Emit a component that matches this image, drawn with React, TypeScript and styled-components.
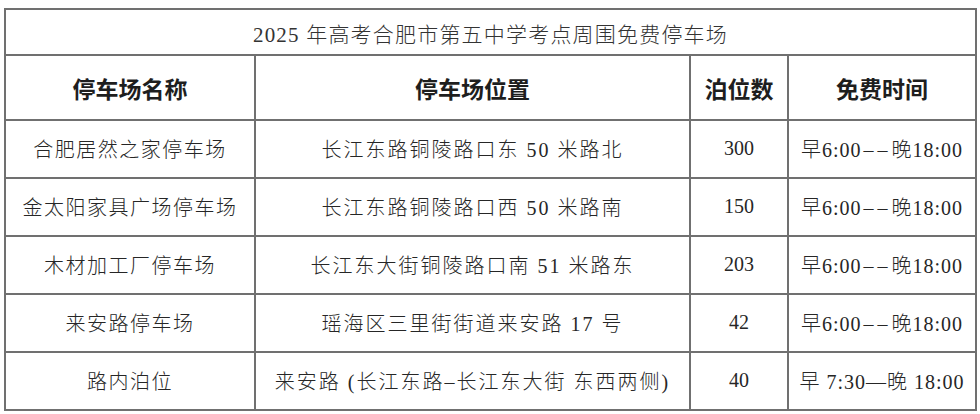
import React from "react";
import styled, { createGlobalStyle } from "styled-components";

type Lot = {
  name: string;
  place: string;
  spaces: string;
  from: string;
  to: string;
  dash: "double" | "em";
};

const lots: Lot[] = [
  { name: "合肥居然之家停车场", place: "长江东路铜陵路口东 50 米路北", spaces: "300", from: "早6:00", to: "晚18:00", dash: "double" },
  { name: "金太阳家具广场停车场", place: "长江东路铜陵路口西 50 米路南", spaces: "150", from: "早6:00", to: "晚18:00", dash: "double" },
  { name: "木材加工厂停车场", place: "长江东大街铜陵路口南 51 米路东", spaces: "203", from: "早6:00", to: "晚18:00", dash: "double" },
  { name: "来安路停车场", place: "瑶海区三里街街道来安路 17 号", spaces: "42", from: "早6:00", to: "晚18:00", dash: "double" },
  { name: "路内泊位", place: "来安路 (长江东路–长江东大街 东西两侧)", spaces: "40", from: "早 7:30", to: "晚 18:00", dash: "em" },
];

const colWidths = [250, 435, 98, 188];

const GlobalStyle = createGlobalStyle`
  html, body {
    margin: 0;
    padding: 0;
    background: #ffffff;
  }
`;

const Page = styled.div`
  padding: 8px 0 0 4px;
  width: 980px;
  height: 414px;
  box-sizing: border-box;
  overflow: hidden;
`;

const Table = styled.table`
  border-collapse: collapse;
  table-layout: fixed;
  width: 971px;
  color: #222222;
  font-family: "Liberation Serif", "Noto Sans CJK SC", serif;
`;

const Cell = styled.td`
  border: 2px solid #707070;
  text-align: center;
  vertical-align: middle;
  padding: 0;
  white-space: nowrap;
  overflow: hidden;
`;

const TitleCell = styled(Cell)`
  height: 42px;
  font-size: 21px;
  font-weight: 300;
  letter-spacing: 1.2px;
  color: #333333;
  padding-top: 2px;
`;

const HeadCell = styled(Cell)`
  height: 63px;
  font-family: "Noto Sans CJK SC", sans-serif;
  font-size: 23px;
  font-weight: 600;
  color: #1e1e1e;
`;

const BodyCell = styled(Cell)<{ $spacing?: number }>`
  height: 54px;
  font-size: 20px;
  font-weight: 300;
  letter-spacing: ${(p) => p.$spacing ?? 1.5}px;
  color: #262626;
  padding-bottom: 2px;
`;

const Dashes = styled.span`
  letter-spacing: 4px;
  margin-left: 2px;
`;

export default function App() {
  return (
    <>
      <GlobalStyle />
      <Page>
        <Table>
          <colgroup>
            {colWidths.map((w, i) => (
              <col key={i} style={{ width: w }} />
            ))}
          </colgroup>
          <thead>
            <tr>
              <TitleCell as="th" colSpan={4}>
                2025 年高考合肥市第五中学考点周围免费停车场
              </TitleCell>
            </tr>
            <tr>
              <HeadCell as="th">停车场名称</HeadCell>
              <HeadCell as="th">停车场位置</HeadCell>
              <HeadCell as="th">泊位数</HeadCell>
              <HeadCell as="th">免费时间</HeadCell>
            </tr>
          </thead>
          <tbody>
            {lots.map((lot) => (
              <tr key={lot.name}>
                <BodyCell>{lot.name}</BodyCell>
                <BodyCell $spacing={2}>{lot.place}</BodyCell>
                <BodyCell $spacing={0}>{lot.spaces}</BodyCell>
                <BodyCell $spacing={1}>
                  {lot.from}
                  {lot.dash === "double" ? <Dashes>––</Dashes> : "—"}
                  {lot.to}
                </BodyCell>
              </tr>
            ))}
          </tbody>
        </Table>
      </Page>
    </>
  );
}
